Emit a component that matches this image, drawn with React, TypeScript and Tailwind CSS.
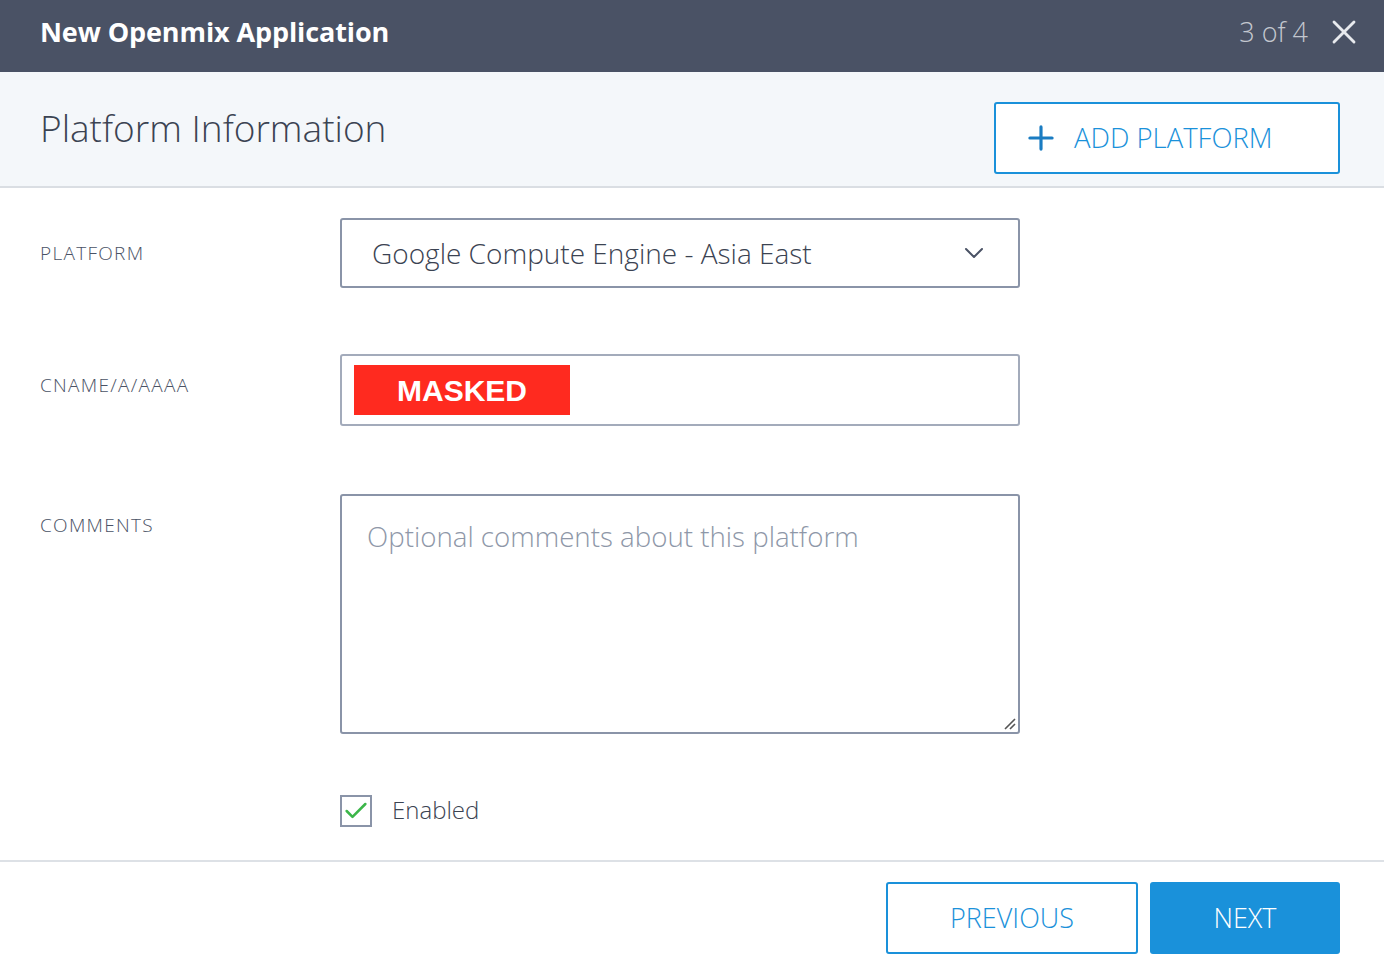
import { Plus, X, ChevronDown, Check } from "lucide-react";

const font = { fontFamily: '"Open Sans", "Noto Sans", sans-serif' };

export default function App() {
  return (
    <div className="w-[1384px] h-[970px] bg-white flex flex-col" style={font}>
      {/* Header */}
      <div className="h-[72px] bg-[#4a5265] flex items-center justify-between pl-[40px] pr-[20px] pb-[8px]">
        <h1 className="text-[27px] font-bold text-white tracking-[-0.1px]">New Openmix Application</h1>
        <div className="flex items-center gap-[16px]">
          <span className="text-[27px] font-light text-[#c3c7cf]">3 of 4</span>
          <X className="w-[40px] h-[40px] text-[#e8eaee]" strokeWidth={1.7} />
        </div>
      </div>

      {/* Section header */}
      <div className="h-[116px] bg-[#f4f7fa] border-b-2 border-[#dadee3] flex items-center justify-between pl-[40px] pr-[44px]">
        <h2 className="text-[37px] font-light text-[#3b4352] -mt-[2px]">Platform Information</h2>
        <button className="w-[346px] h-[72px] mt-[18px] bg-white border-2 border-[#1a91da] rounded-[3px] flex items-center pl-[26px] gap-[14px] text-[#1a91da]">
          <Plus className="w-[38px] h-[38px] text-[#1a7cc2]" strokeWidth={2} />
          <span className="text-[27.5px] font-light">ADD PLATFORM</span>
        </button>
      </div>

      {/* Form */}
      <div className="flex-1 flex flex-col pt-[30px] pl-[40px]">
        <div className="flex">
          <label className="w-[300px] pt-[21px] text-[19px] font-light tracking-[1.3px] text-[#4a5265]">PLATFORM</label>
          <div className="w-[680px] h-[70px] border-2 border-[#8a94a8] rounded-[3px] flex items-center justify-between pl-[30px] pr-[28px]">
            <span className="text-[28px] font-light text-[#3b4352]">Google Compute Engine - Asia East</span>
            <ChevronDown className="w-[32px] h-[32px] text-[#4a5265]" strokeWidth={1.5} />
          </div>
        </div>

        <div className="flex mt-[66px]">
          <label className="w-[300px] pt-[17px] text-[19px] font-light tracking-[1.3px] text-[#4a5265]">CNAME/A/AAAA</label>
          <div className="w-[680px] h-[72px] border-2 border-[#a3abbb] rounded-[3px] flex items-center pl-[12px]">
            <div className="w-[216px] h-[50px] bg-[#ff2a1f] flex items-center justify-center">
              <span className="text-[30px] font-bold text-white" style={{ fontFamily: '"Liberation Sans", Arial, sans-serif' }}>MASKED</span>
            </div>
          </div>
        </div>

        <div className="flex mt-[68px]">
          <label className="w-[300px] pt-[17px] text-[19px] font-light tracking-[1.3px] text-[#4a5265]">COMMENTS</label>
          <div className="relative w-[680px] h-[240px] border-2 border-[#8a94a8] rounded-[3px] pl-[25px] pt-[20px]">
            <span className="text-[27.7px] font-light text-[#8e97a8]">Optional comments about this platform</span>
            <svg className="absolute right-[2px] bottom-[2px]" width="14" height="14" viewBox="0 0 14 14">
              <path d="M3 13 L13 3 M8 13 L13 8" stroke="#555" strokeWidth="1.6" />
            </svg>
          </div>
        </div>

        <div className="flex items-center mt-[60px] ml-[300px] gap-[20px]">
          <div className="w-[32px] h-[32px] border-2 border-[#8a94a8] flex items-center justify-center">
            <Check className="w-[30px] h-[30px] text-[#3cb64a]" strokeWidth={2.2} />
          </div>
          <span className="text-[24px] font-light text-[#3b4352] -mt-[2px]">Enabled</span>
        </div>
      </div>

      {/* Footer */}
      <div className="h-[110px] border-t-2 border-[#dde1e6] flex justify-end items-start pt-[20px] pr-[44px] gap-[12px]">
        <button className="w-[252px] h-[72px] border-2 border-[#1a91da] rounded-[3px] bg-white text-[27px] font-light text-[#1a91da]">
          PREVIOUS
        </button>
        <button className="w-[190px] h-[72px] rounded-[3px] bg-[#1a91da] text-[27px] font-light text-white">
          NEXT
        </button>
      </div>
    </div>
  );
}
